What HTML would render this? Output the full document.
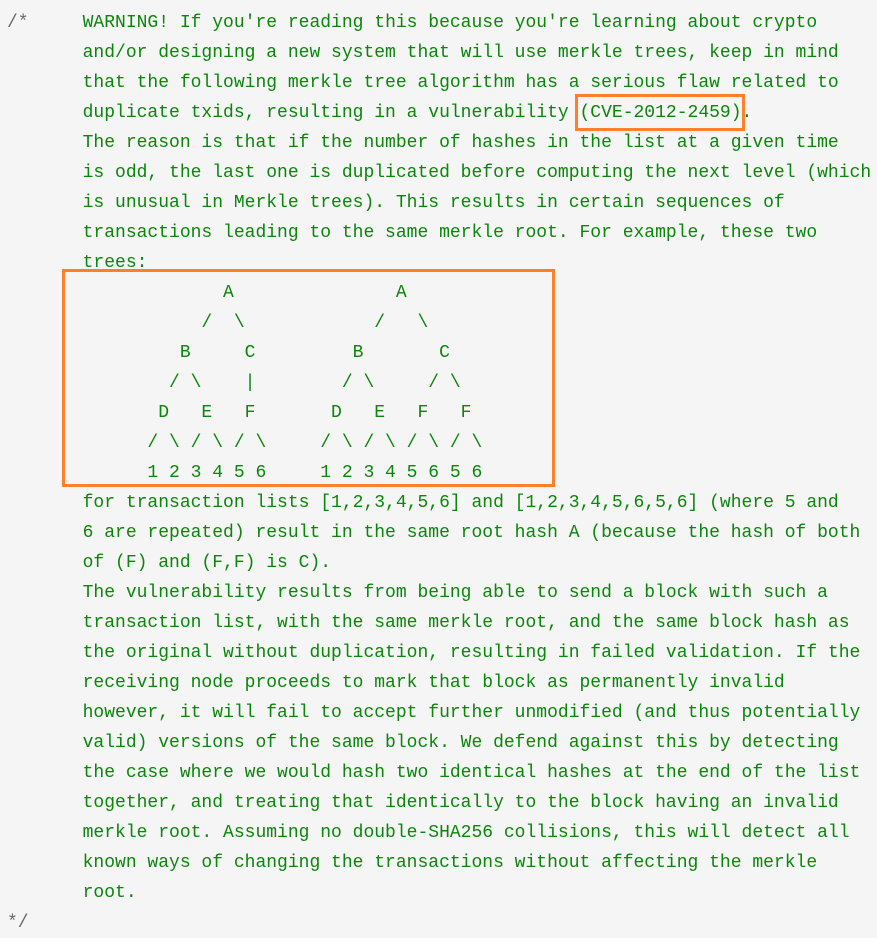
<!DOCTYPE html>
<html><head><meta charset="utf-8"><style>
html,body{margin:0;padding:0;background:#f5f5f5;width:877px;height:934px;overflow:hidden}
pre{margin:0;position:absolute;left:7px;top:8px;font-family:"Liberation Mono","Courier New",monospace;font-size:18px;line-height:30px;color:#0a870a;white-space:pre}
.g{color:#6a6a6a}
.box{position:absolute;border:3px solid #ff7f2a;box-sizing:border-box}
</style></head><body>
<pre><span class="g">/*</span>     WARNING! If you're reading this because you're learning about crypto
       and/or designing a new system that will use merkle trees, keep in mind
       that the following merkle tree algorithm has a serious flaw related to
       duplicate txids, resulting in a vulnerability (CVE-2012-2459).
       The reason is that if the number of hashes in the list at a given time
       is odd, the last one is duplicated before computing the next level (which
       is unusual in Merkle trees). This results in certain sequences of
       transactions leading to the same merkle root. For example, these two
       trees:
                    A               A
                  /  \            /   \
                B     C         B       C
               / \    |        / \     / \
              D   E   F       D   E   F   F
             / \ / \ / \     / \ / \ / \ / \
             1 2 3 4 5 6     1 2 3 4 5 6 5 6
       for transaction lists [1,2,3,4,5,6] and [1,2,3,4,5,6,5,6] (where 5 and
       6 are repeated) result in the same root hash A (because the hash of both
       of (F) and (F,F) is C).
       The vulnerability results from being able to send a block with such a
       transaction list, with the same merkle root, and the same block hash as
       the original without duplication, resulting in failed validation. If the
       receiving node proceeds to mark that block as permanently invalid
       however, it will fail to accept further unmodified (and thus potentially
       valid) versions of the same block. We defend against this by detecting
       the case where we would hash two identical hashes at the end of the list
       together, and treating that identically to the block having an invalid
       merkle root. Assuming no double-SHA256 collisions, this will detect all
       known ways of changing the transactions without affecting the merkle
       root.
<span class="g">*/</span></pre>
<div class="box" style="left:575px;top:94px;width:170px;height:37px"></div>
<div class="box" style="left:62px;top:269px;width:493px;height:218px"></div>
</body></html>
